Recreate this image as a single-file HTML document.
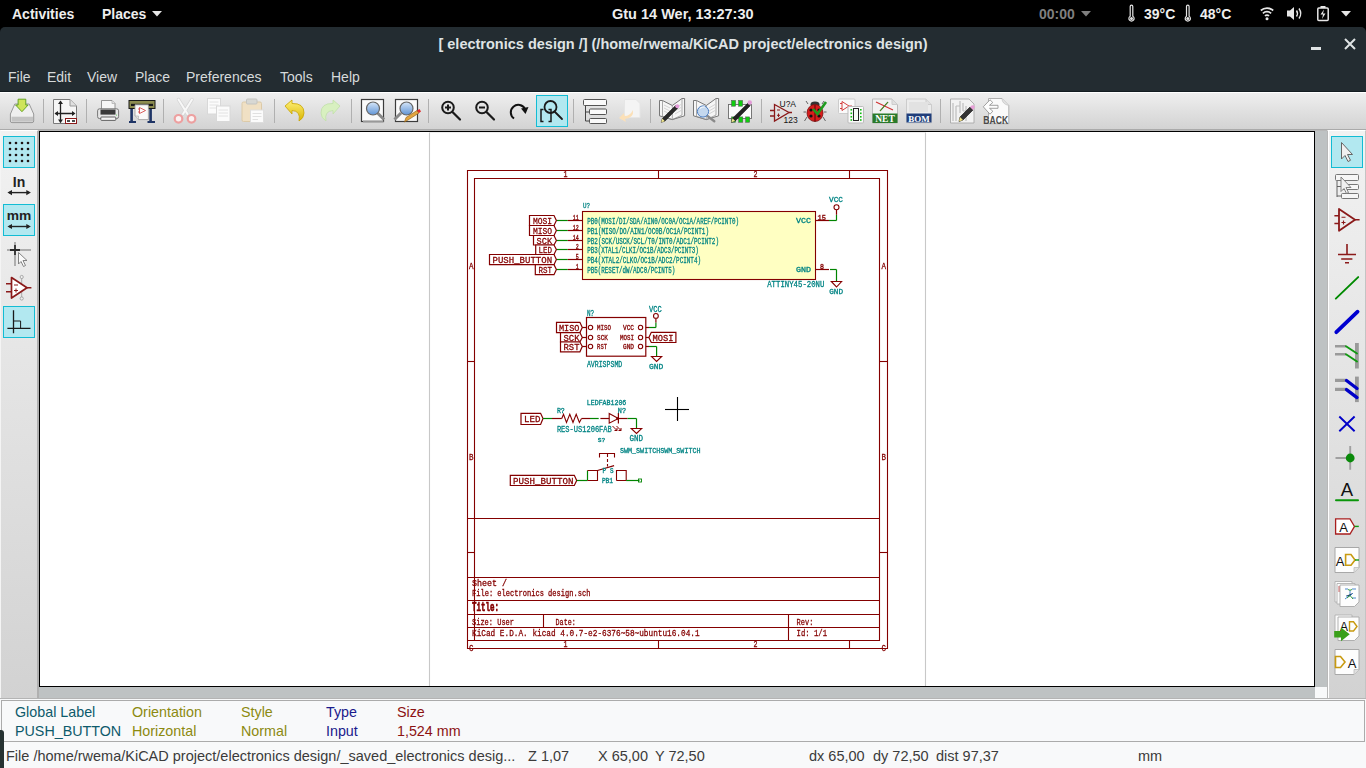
<!DOCTYPE html>
<html><head><meta charset="utf-8">
<style>
*{box-sizing:border-box}
html,body{margin:0;padding:0;width:1366px;height:768px;overflow:hidden;background:#000;font-family:"Liberation Sans",sans-serif}
.a{position:absolute}
#top{left:0;top:0;width:1366px;height:27px;background:#000;color:#eee;font-weight:bold;font-size:14px}
#top span{position:absolute;top:6px;white-space:nowrap}
#win{left:0;top:27px;width:1366px;height:65px;background:#232c31;border-radius:5px 5px 0 0}
#ttl{left:0;top:27px;width:1366px;text-align:center;color:#dfe3e4;font-weight:bold;font-size:14.5px;line-height:16px;padding-top:9px}
.menu{top:67px;color:#d6dadb;font-size:14px;line-height:20px;white-space:nowrap}
#tb{left:0;top:92px;width:1366px;height:39px;background:linear-gradient(#fff 0,#fff 1px,#efefef 1px,#e2e2e2 17px,#d3d3d3 37px,#aaa 37px,#aaa 38px,#b8b8b8 38px)}
.sep{position:absolute;top:98px;width:1px;height:26px;background:#b4b4b4;border-right:1px solid #f4f4f4}
#lp{left:0;top:130px;width:39px;height:568px;background:linear-gradient(#f2f2f2,#e2e2e2 50%,#d2d2d2);border-left:1px solid #f4f4f4;border-top:1px solid #fff;border-right:2px solid #b0b0b0}
#rp{left:1327px;top:130px;width:39px;height:568px;background:linear-gradient(#f2f2f2,#e2e2e2 50%,#d2d2d2);border-left:1px solid #b8b8b8;border-top:1px solid #fff;border-right:1px solid #c4c4c4;box-shadow:inset 1px 0 0 #fff}
.sel{position:absolute;width:32px;height:32px;background:#b2e8f0;border:1.5px solid #19bfd6}
#cv{left:39px;top:131px;width:1276px;height:556px;background:#fff;border:1px solid #000}
#sbr{left:1315px;top:131px;width:12px;height:556px;background:#bec2c3}
#sbb{left:39px;top:687px;width:1276px;height:11px;background:#bec2c3}
#corner{left:1315px;top:687px;width:12px;height:11px;background:#f8f9fa}
#msg{left:0;top:698px;width:1366px;height:45px;background:#f8f9fa;border-top:1px solid #b4b4b4}
#msgin{left:1px;top:700px;width:1364px;height:42px;border:1px solid #ababab;background:#f8f9fa}
.mt{position:absolute;font-size:14.3px;white-space:nowrap;line-height:16px}
#st{left:0;top:742px;width:1366px;height:26px;background:#f8f9fa}
.stt{position:absolute;top:748px;font-size:14.5px;color:#3b3b3b;white-space:nowrap;line-height:16px}
</style></head><body>
<div id="top" class="a">
 <span style="left:12px">Activities</span>
 <span style="left:102px">Places</span>
 <svg class="a" style="left:152px;top:11px" width="10" height="6"><path d="M0 0H10L5 5.5Z" fill="#e6e6e6"/></svg>
 <span style="left:612px;font-size:14.5px">Gtu 14 Wer, 13:27:30</span>
 <span style="left:1039px;color:#7f7f7f">00:00</span>
 <svg class="a" style="left:1081px;top:11px" width="10" height="6"><path d="M0 0H10L5 5.5Z" fill="#7f7f7f"/></svg>
 <span style="left:1144px">39°C</span>
 <span style="left:1200px">48°C</span>
 <svg class="a" style="left:1341px;top:11px" width="10" height="6"><path d="M0 0H10L5 5.5Z" fill="#e6e6e6"/></svg>
</div>
<svg class="a" style="left:0;top:0" width="1366" height="27">
 <g fill="none" stroke="#e6e6e6" stroke-width="1.2">
  <path d="M1130.2 6.5A1.3 1.3 0 0 1 1132.8 6.5V16.2A2.6 2.6 0 1 1 1130.2 16.2Z"/>
  <path d="M1186.5 6.5A1.3 1.3 0 0 1 1189.1 6.5V16.2A2.6 2.6 0 1 1 1186.5 16.2Z"/>
 </g>
 <circle cx="1131.5" cy="18.4" r="1.5" fill="#e6e6e6"/><circle cx="1187.8" cy="18.4" r="1.5" fill="#e6e6e6"/>
 <g fill="none" stroke="#e6e6e6" stroke-width="1.7">
  <path d="M1260.8 10.5A9.5 9.5 0 0 1 1273.2 10.5"/>
  <path d="M1262.9 13.3A6 6 0 0 1 1271.1 13.3"/>
  <path d="M1265 16A2.8 2.8 0 0 1 1269 16"/>
 </g>
 <circle cx="1267" cy="18.7" r="1.5" fill="#e6e6e6"/>
 <path d="M1287 10.5H1290L1294 7V20L1290 16.5H1287Z" fill="#e6e6e6"/>
 <g fill="none" stroke="#e6e6e6" stroke-width="1.4"><path d="M1296.5 10.5Q1298.5 13.5 1296.5 16.5"/><path d="M1299 8.5Q1302.5 13.5 1299 18.5"/></g>
 <rect x="1317.8" y="8" width="10.4" height="12.5" rx="1" fill="none" stroke="#e6e6e6" stroke-width="1.5"/>
 <rect x="1320.5" y="6" width="5" height="2" fill="#e6e6e6"/>
 <path d="M1324 9.5L1320.5 14.5H1323L1322 19L1325.5 13.5H1323Z" fill="#e6e6e6"/>
</svg>
<div id="win" class="a"></div>
<div id="ttl" class="a">[ electronics design /] (/home/rwema/KiCAD project/electronics design)</div>
<div class="a" style="left:1311px;top:47px;width:10px;height:2.5px;background:#dfe3e4"></div>
<svg class="a" style="left:1344px;top:38px" width="12" height="12"><path d="M1 1L11 11M11 1L1 11" stroke="#dfe3e4" stroke-width="2"/></svg>
<span class="a menu" style="left:8px">File</span>
<span class="a menu" style="left:47px">Edit</span>
<span class="a menu" style="left:87px">View</span>
<span class="a menu" style="left:135px">Place</span>
<span class="a menu" style="left:186px">Preferences</span>
<span class="a menu" style="left:280px">Tools</span>
<span class="a menu" style="left:331px">Help</span>
<div class="a" style="left:0;top:91px;width:1366px;height:1px;background:#141d22"></div>
<div id="tb" class="a"></div>
<div id="lp" class="a"></div>
<div id="rp" class="a"></div>
<div id="cv" class="a"></div>
<div id="sbr" class="a"></div>
<div id="sbb" class="a"></div>
<div id="corner" class="a"></div>
<div id="msg" class="a"></div>
<div id="msgin" class="a"></div>
<span class="mt" style="left:15px;top:704px;color:#0d5a6b">Global Label</span>
<span class="mt" style="left:15px;top:723px;color:#0d5a6b">PUSH_BUTTON</span>
<span class="mt" style="left:132px;top:704px;color:#8c8a10">Orientation</span>
<span class="mt" style="left:132px;top:723px;color:#8c8a10">Horizontal</span>
<span class="mt" style="left:241px;top:704px;color:#8c8a10">Style</span>
<span class="mt" style="left:241px;top:723px;color:#8c8a10">Normal</span>
<span class="mt" style="left:326px;top:704px;color:#1a1a8c">Type</span>
<span class="mt" style="left:326px;top:723px;color:#1a1a8c">Input</span>
<span class="mt" style="left:397px;top:704px;color:#8c1212">Size</span>
<span class="mt" style="left:397px;top:723px;color:#8c1212">1,524 mm</span>
<div id="st" class="a"></div>
<span class="stt" style="left:6px">File /home/rwema/KiCAD project/electronics design/_saved_electronics desig...</span>
<span class="stt" style="left:528px">Z 1,07</span>
<span class="stt" style="left:598px">X 65,00</span>
<span class="stt" style="left:655px">Y 72,50</span>
<span class="stt" style="left:809px">dx 65,00</span>
<span class="stt" style="left:873px">dy 72,50</span>
<span class="stt" style="left:936px">dist 97,37</span>
<span class="stt" style="left:1138px">mm</span>
<div class="a" style="left:0;top:730px;width:4px;height:38px;background:#263232;border-radius:0 3px 0 0"></div>
<!--TOOLBAR-->
<svg class="a" style="left:0;top:0" width="1366" height="768" viewBox="0 0 1366 768">
<defs>
<linearGradient id="gDrive" x1="0" y1="0" x2="0" y2="1"><stop offset="0" stop-color="#f4f4f4"/><stop offset="0.6" stop-color="#d8d8d8"/><stop offset="1" stop-color="#a8a8a8"/></linearGradient>
<linearGradient id="gGreen" x1="0" y1="0" x2="0" y2="1"><stop offset="0" stop-color="#b6e34e"/><stop offset="1" stop-color="#5fa60f"/></linearGradient>
<linearGradient id="gYel" x1="0" y1="0" x2="0" y2="1"><stop offset="0" stop-color="#fff27a"/><stop offset="1" stop-color="#d9b400"/></linearGradient>
<linearGradient id="gLens" x1="0" y1="0" x2="0" y2="1"><stop offset="0" stop-color="#d6e6f8"/><stop offset="1" stop-color="#5f94d6"/></linearGradient>
</defs>
<!-- separators -->
<g fill="#b0b0b0">
<rect x="43" y="99" width="1" height="24"/><rect x="86" y="99" width="1" height="24"/><rect x="163" y="99" width="1" height="24"/>
<rect x="274" y="99" width="1" height="24"/><rect x="351" y="99" width="1" height="24"/><rect x="428" y="99" width="1" height="24"/>
<rect x="573" y="99" width="1" height="24"/><rect x="650" y="99" width="1" height="24"/><rect x="761" y="99" width="1" height="24"/>
<rect x="940" y="99" width="1" height="24"/>
</g>
<!-- save -->
<path d="M14.8 104H29.2L33.7 114V121Q33.7 122.6 32 122.6H12Q10.4 122.6 10.4 121V114Z" fill="#efefef" stroke="#8e8e8e" stroke-width="0.9"/>
<rect x="11.5" y="116.7" width="21.5" height="5" fill="#c4c4c4"/>
<path d="M18.1 99.2H25.8V105H28.1L21.95 111.7L15.6 105H18.1Z" fill="#cfe45a" stroke="#5a9e1a" stroke-width="0.9"/>
<!-- page settings -->
<path d="M53.5 99.5H70L76.5 106V123.5H53.5Z" fill="#f6f6f6" stroke="#7a7a7a"/>
<path d="M70 99.5V106H76.5" fill="#e0e0e0" stroke="#9a9a9a"/>
<path d="M60.5 101.5V122.5M55.5 113.5H74" stroke="#222" stroke-width="1.3"/>
<path d="M60.5 100.5L58 104H63ZM60.5 123L58 119.5H63ZM54.5 113.5L58 111V116ZM75.5 113.5L72 111V116Z" fill="#222"/>
<rect x="65.5" y="118.5" width="11" height="5" fill="#fff" stroke="#8b1a1a"/>
<path d="M67 121H70M72 121H75" stroke="#111" stroke-width="1.4"/>
<!-- print -->
<path d="M101.5 100.5H112L115 103.5V111H101.5Z" fill="#f6f6f6" stroke="#8a8a8a" stroke-width="0.9"/>
<path d="M112 100.5V103.5H115" fill="#e4e4e4" stroke="#aaa" stroke-width="0.7"/>
<rect x="97.6" y="108.8" width="21" height="9.8" rx="2" fill="#e6e6e6" stroke="#6a6a6a" stroke-width="0.9"/>
<rect x="100.5" y="109.6" width="15" height="5" fill="#3a3a3a"/>
<rect x="100.8" y="117" width="15" height="3.4" rx="0.8" fill="#f4f4f4" stroke="#555" stroke-width="0.9"/>
<rect x="116" y="114.6" width="1" height="1" fill="#5fd35f"/>
<!-- plot -->
<path d="M131.6 108V121.3M150.6 108V121.3" stroke="#1f3566" stroke-width="2.6"/>
<rect x="129" y="121" width="7" height="2" fill="#1f3566"/><rect x="147.5" y="121" width="7.5" height="2" fill="#1f3566"/>
<rect x="129" y="100.5" width="26" height="8" fill="#8c8c50" stroke="#1a1a1a" stroke-width="1"/>
<rect x="131" y="103.8" width="22" height="2.2" fill="#1a1a1a"/>
<path d="M135 104.8H148.4V119.6H138.5L135 116Z" fill="#fafafa" stroke="#999" stroke-width="0.8"/>
<path d="M138.5 119.6V116H135" fill="#e4e4e4" stroke="#aaa" stroke-width="0.6"/>
<path d="M139.5 107.5L145.5 110.5L139.5 113.5ZM138 109H139.5M138 112H139.5" fill="none" stroke="#d03a3a" stroke-width="0.8"/>
<!-- cut disabled -->
<path d="M178.5 99.5L187.5 114M192 99.5L183 114" stroke="#d6d6d6" stroke-width="3.4" stroke-linecap="round"/>
<path d="M178.5 99.5L187.5 114M192 99.5L183 114" stroke="#f8f8f8" stroke-width="2" stroke-linecap="round"/>
<circle cx="178.5" cy="118.8" r="3.8" fill="#fbf3f3" stroke="#eda0a0" stroke-width="2.2"/>
<circle cx="191.5" cy="118.8" r="3.8" fill="#fbf3f3" stroke="#eda0a0" stroke-width="2.2"/>
<!-- copy -->
<rect x="207.5" y="98.5" width="13" height="15.5" fill="#fbfbfb" stroke="#d8d8d8"/>
<path d="M209.5 102H218.5M209.5 105H218.5M209.5 108H218.5" stroke="#e2e2e2"/>
<rect x="216.5" y="106" width="13.5" height="15.5" fill="#fbfbfb" stroke="#d8d8d8"/>
<path d="M218.5 110H228M218.5 113H228M218.5 116H228" stroke="#e2e2e2"/>
<!-- paste -->
<rect x="242" y="102" width="19.5" height="19.5" rx="1.5" fill="#f0e0c4" stroke="#dccaa8"/>
<rect x="246.5" y="99" width="10.5" height="5" rx="1" fill="#d8d8d4" stroke="#c4c4c0"/>
<rect x="250.5" y="110" width="13" height="12.5" fill="#fbfbfb" stroke="#dedede"/>
<path d="M252.5 113.5H261.5M252.5 116.5H261.5M252.5 119.5H258" stroke="#e0e0e0"/>
<!-- undo -->
<path d="M285 106L292 100V103.5Q304 103 304 113Q304 118 299 121Q301 111 292 110.5V114Z" fill="url(#gYel)" stroke="#c9a400" stroke-width="0.8"/>
<!-- redo disabled -->
<path d="M340 106L333 100V103.5Q321 103 321 113Q321 118 326 121Q324 111 333 110.5V114Z" fill="#d8f0c0" stroke="#c0e0a8" stroke-width="0.8"/>
<!-- find -->
<rect x="361.5" y="99.5" width="22" height="22" fill="#fafafa" stroke="#3c3c3c" stroke-width="1.2"/>
<path d="M363 120.5H383.5V122.5H363Z" fill="#999"/>
<path d="M377.5 113L384 119.5" stroke="#888" stroke-width="3"/>
<circle cx="373" cy="108.5" r="6.5" fill="url(#gLens)" stroke="#666" stroke-width="1.2"/>
<!-- find replace -->
<rect x="395.5" y="99.5" width="22" height="22" fill="#fafafa" stroke="#3c3c3c" stroke-width="1.2"/>
<path d="M401 113L394.5 119.5" stroke="#888" stroke-width="3"/>
<circle cx="406.5" cy="108.5" r="6.5" fill="url(#gLens)" stroke="#666" stroke-width="1.2"/>
<path d="M404.5 122L406 117.5L417 110.5L419 113L408 120Z" fill="#e4a640" stroke="#8a5a10" stroke-width="0.6"/>
<path d="M417 110.5L419.5 109L421 111.5L419 113Z" fill="#e02a2a"/>
<!-- zoom in -->
<circle cx="448" cy="107.5" r="5.8" fill="none" stroke="#1a1a1a" stroke-width="2"/>
<path d="M452.5 112L460 119.5" stroke="#1a1a1a" stroke-width="2.2" stroke-linecap="round"/>
<path d="M445 107.5H451M448 104.5V110.5" stroke="#1a1a1a" stroke-width="2"/>
<!-- zoom out -->
<circle cx="482" cy="107.5" r="5.8" fill="none" stroke="#1a1a1a" stroke-width="2"/>
<path d="M486.5 112L494 119.5" stroke="#1a1a1a" stroke-width="2.2" stroke-linecap="round"/>
<path d="M479 107.5H485" stroke="#1a1a1a" stroke-width="2"/>
<!-- redraw -->
<path d="M514 118.5A7.5 7.5 0 1 1 525 109" fill="none" stroke="#111" stroke-width="2"/>
<path d="M521 108.5L528.5 107L525.5 114Z" fill="#111"/>
<!-- zoom fit selected -->
<rect x="536.5" y="95.5" width="31" height="31" fill="#b2e8f0" stroke="#12bcd4" stroke-width="1"/>
<circle cx="550.5" cy="107" r="6" fill="none" stroke="#1a1a1a" stroke-width="1.8"/>
<path d="M554.5 111.5L562 119" stroke="#1a1a1a" stroke-width="1.8" stroke-linecap="round"/>
<path d="M543.5 109.5H541V121.5H543.5M548.5 109.5H551V121.5H548.5" fill="none" stroke="#1a1a1a" stroke-width="1.5"/>
<!-- hierarchy -->
<path d="M585.5 105.5V121M585.5 112H589.5M585.5 121H589.5" fill="none" stroke="#444" stroke-width="1"/>
<rect x="583.5" y="99.5" width="23" height="6" rx="1" fill="#fafafa" stroke="#555"/>
<rect x="589.5" y="109" width="17" height="5.5" rx="1" fill="#fafafa" stroke="#555"/>
<rect x="589.5" y="118.5" width="17" height="5" rx="1" fill="#fafafa" stroke="#555"/>
<!-- leave sheet disabled -->
<path d="M624.5 99.5H636L640 103.5V117.5H624.5Z" fill="#f4f4f4" stroke="#e6e6e6"/>
<path d="M633 110Q634 118 625 119L626 122L619 118L624 113L624.5 116Q630 116 633 110Z" fill="#fbe0b8"/>
<!-- library editor -->
<path d="M659.5 100.5H662.5L672.3 105.5L682 98.5H684.6V115.8L672.3 119.6L659.5 115.8Z" fill="#f6f6f6" stroke="#6a6a6a" stroke-width="0.9" stroke-linejoin="round"/>
<path d="M662.5 100.5V116.5L672.3 119.6M682 98.5V115L672.3 119.6M672.3 105.5V119.6" fill="none" stroke="#8a8a8a" stroke-width="0.7"/>
<path d="M664 105L670 108M664 108L670 111M664 111L670 114M675 108L681 104.5M675 111L681 107.5M675 114L681 110.5" stroke="#c4c4c4" stroke-width="0.7"/>
<path d="M661.2 122.3L662.3 118.6L675.5 105.6L677.9 108L664.9 121.2Z" fill="#2a2a2a" stroke="#111" stroke-width="0.5"/>
<path d="M661.2 122.3L662.3 118.6L664.9 121.2Z" fill="#f2e890"/>
<circle cx="677.3" cy="106.2" r="2" fill="#e49ad8"/>
<!-- lib browser -->
<path d="M693.5 100.5H696.5L706.3 105.5L716 98.5H718.6V115.8L706.3 119.6L693.5 115.8Z" fill="#f6f6f6" stroke="#6a6a6a" stroke-width="0.9" stroke-linejoin="round"/>
<path d="M696.5 100.5V116.5L706.3 119.6M716 98.5V115L706.3 119.6M706.3 105.5V119.6" fill="none" stroke="#8a8a8a" stroke-width="0.7"/>
<path d="M709 108L715 104.5M709 111L715 107.5M709 114L715 110.5" stroke="#c4c4c4" stroke-width="0.7"/>
<path d="M707.5 116L714.3 121.3" stroke="#8a8a8a" stroke-width="2.4" stroke-linecap="round"/>
<circle cx="703" cy="111.5" r="5.6" fill="#c4d8ee" stroke="#4a7cc0" stroke-width="1"/>
<path d="M700 108.5Q702 106.5 705 107" stroke="#f4f8fc" stroke-width="1.2" fill="none"/>
<!-- footprint editor -->
<rect x="728.5" y="104.5" width="23" height="14" fill="#fbfbfb" stroke="#6a6a6a" stroke-width="0.9"/>
<rect x="731.5" y="100.4" width="4.1" height="5.8" fill="#10cc10" stroke="#555" stroke-width="0.5"/><rect x="738.5" y="100.4" width="4.1" height="5.8" fill="#10cc10" stroke="#555" stroke-width="0.5"/>
<rect x="731.5" y="116.9" width="4.1" height="5.4" fill="#10cc10" stroke="#555" stroke-width="0.5"/><rect x="738.7" y="116.9" width="4.1" height="5.4" fill="#10cc10" stroke="#555" stroke-width="0.5"/><rect x="745.6" y="116.9" width="4.1" height="5.4" fill="#10cc10" stroke="#555" stroke-width="0.5"/>
<path d="M731.3 122.3L732.5 118.3L747.8 103.2L750.3 105.7L735.2 121Z" fill="#222" stroke="#111" stroke-width="0.5"/>
<path d="M731.3 122.3L732.5 118.3L735.2 121Z" fill="#f2e890"/>
<circle cx="749.8" cy="102.5" r="2.2" fill="#e49ad8"/>
<!-- annotate -->
<path d="M774.5 104.5L789 112.5L774.5 121Z" fill="none" stroke="#8b1a1a" stroke-width="1.3"/>
<path d="M770 110.5H774.5M770 116H774.5M789 112.5H792" stroke="#8b1a1a" stroke-width="1.3"/>
<path d="M777 110H780M778.5 113.5V117M777 115.3H780" stroke="#8b1a1a" stroke-width="1"/>
<text x="779.5" y="106.5" font-size="8.5" font-family="Liberation Sans" fill="#111">U?A</text>
<text x="783.5" y="122.5" font-size="8.5" font-family="Liberation Sans" fill="#111">123</text>
<!-- ERC bug -->
<path d="M808 104L806 101M822 104L824 101M806 112H803.5M824 112H826.5M807 117L804.5 121M823 117L825.5 121" stroke="#555" stroke-width="0.9"/>
<ellipse cx="815" cy="104.5" rx="4.5" ry="3" fill="#333"/>
<ellipse cx="815" cy="113" rx="8" ry="8.5" fill="#d81c1c" stroke="#7a1010" stroke-width="0.8"/>
<path d="M815 105V121.5" stroke="#300" stroke-width="0.8"/>
<circle cx="811" cy="110" r="1.6" fill="#111"/><circle cx="819" cy="110" r="1.6" fill="#111"/><circle cx="811" cy="116" r="1.6" fill="#111"/><circle cx="819" cy="116" r="1.6" fill="#111"/>
<path d="M813 109L817.5 114L826 102" fill="none" stroke="#1e9a1e" stroke-width="2.6"/>
<!-- cvpcb -->
<rect x="838.5" y="99" width="16.5" height="14.5" rx="1" fill="#fafafa" stroke="#ccc"/>
<path d="M842 101.5L849 106L842 110.5Z" fill="none" stroke="#d02a2a" stroke-width="0.9"/>
<path d="M840 103.5H842M840 108.5H842M849 106H852" stroke="#d02a2a" stroke-width="0.9"/>
<rect x="848" y="106.5" width="15.5" height="16.5" rx="1" fill="#fafafa" stroke="#bbb"/>
<rect x="853.5" y="108.5" width="5" height="12" fill="#fafafa" stroke="#222" stroke-width="1"/>
<g fill="#11bb11"><rect x="850.5" y="109" width="1.6" height="1.6"/><rect x="850.5" y="112.5" width="1.6" height="1.6"/><rect x="850.5" y="116" width="1.6" height="1.6"/><rect x="850.5" y="119.2" width="1.6" height="1.6"/><rect x="860" y="109" width="1.6" height="1.6"/><rect x="860" y="112.5" width="1.6" height="1.6"/><rect x="860" y="116" width="1.6" height="1.6"/><rect x="860" y="119.2" width="1.6" height="1.6"/></g>
<!-- NET -->
<path d="M872.5 99H892L897.5 104.5V123H872.5Z" fill="#f2f2f2" stroke="#bbb"/>
<path d="M892 99V104.5H897.5" fill="#e0e0e0" stroke="#ccc"/>
<path d="M876 102L893 110M880 111L888 102" stroke="#d03030" stroke-width="1.1"/>
<path d="M880 111L888 102" stroke="#2a9a2a" stroke-width="1.1"/>
<rect x="872.5" y="113.5" width="25" height="9.5" fill="#2a7a2a"/>
<text x="885" y="122" font-size="9.5" font-weight="bold" font-family="Liberation Serif" fill="#fff" text-anchor="middle">NET</text>
<!-- BOM -->
<path d="M906.5 99H926L931.5 104.5V123H906.5Z" fill="#ececec" stroke="#ccc"/>
<path d="M926 99V104.5H931.5" fill="#e0e0e0" stroke="#ccc"/>
<rect x="909" y="102" width="19" height="10" fill="#e2e2e2"/>
<rect x="906.5" y="113.5" width="25" height="9" fill="#213e7a"/>
<text x="919" y="121.5" font-size="9" font-weight="bold" font-family="Liberation Serif" fill="#fff" text-anchor="middle">BOM</text>
<!-- pcbnew -->
<path d="M950.5 99H969L974 104V123H950.5Z" fill="#f2f2f2" stroke="#a8a8a8" stroke-width="0.9"/>
<path d="M953 103V121M956 106V121M960 101V113M963 103V111M966 106V121" stroke="#bdbdbd" stroke-width="1.2"/>
<path d="M956 106H960M963 111H966" stroke="#bdbdbd" stroke-width="1.2"/>
<path d="M959 121.5L960 117L970 107L973 110L963 120Z" fill="#333" stroke="#111" stroke-width="0.6"/>
<path d="M959 121.5L960 117L963 120Z" fill="#f0e080"/>
<path d="M970 107L971.5 105.5Q974 104.5 975 107L973 110Z" fill="#e8a0d8"/>
<!-- BACK -->
<path d="M988.5 98.5H1002L1008.8 105.5V123.7H988.5Z" fill="#fafafa" stroke="#a8a8a8" stroke-width="0.9"/>
<path d="M1002 98.5Q1002 104 1008.8 105.5" fill="#e2e2e2" stroke="#bbb" stroke-width="0.6"/>
<path d="M983.3 106.8L990 99.8L992.8 102.5L989.5 105.3H998V108.3H989.5L992.8 111.2L990 114.2Z" fill="#fdfdfd" stroke="#8a8a8a" stroke-width="0.8" stroke-linejoin="round"/>
<text x="983.3" y="123.6" font-size="11" font-weight="bold" font-family="Liberation Sans" fill="#4a4a4a" textLength="24.8" lengthAdjust="spacingAndGlyphs">BACK</text>
</svg>

<!--SIDE-->
<svg class="a" style="left:0;top:0" width="1366" height="768" viewBox="0 0 1366 768">
<!-- LEFT TOOLBAR -->
<rect x="3.5" y="136.5" width="31" height="31" fill="#b2e8f0" stroke="#12bcd4" stroke-width="1"/>
<g fill="#1e1414">
<circle cx="10" cy="143" r="1.3"/><circle cx="16" cy="143" r="1.3"/><circle cx="22" cy="143" r="1.3"/><circle cx="28" cy="143" r="1.3"/>
<circle cx="10" cy="149" r="1.3"/><circle cx="16" cy="149" r="1.3"/><circle cx="22" cy="149" r="1.3"/><circle cx="28" cy="149" r="1.3"/>
<circle cx="10" cy="155" r="1.3"/><circle cx="16" cy="155" r="1.3"/><circle cx="22" cy="155" r="1.3"/><circle cx="28" cy="155" r="1.3"/>
<circle cx="10" cy="161" r="1.3"/><circle cx="16" cy="161" r="1.3"/><circle cx="22" cy="161" r="1.3"/><circle cx="28" cy="161" r="1.3"/>
</g>
<text x="19" y="187" font-size="14" font-weight="bold" font-family="Liberation Sans" fill="#222" text-anchor="middle">In</text>
<path d="M9 192.6H29" stroke="#222" stroke-width="1.4"/>
<path d="M7.4 192.6L12 190V195.2ZM30.9 192.6L26.3 190V195.2Z" fill="#222"/>
<rect x="3.5" y="204.5" width="31" height="31" fill="#b2e8f0" stroke="#12bcd4" stroke-width="1"/>
<text x="19" y="220.3" font-size="13" font-weight="bold" font-family="Liberation Sans" fill="#222" text-anchor="middle" textLength="24.6" lengthAdjust="spacingAndGlyphs">mm</text>
<path d="M9 226.5H29" stroke="#222" stroke-width="1.4"/>
<path d="M7.4 226.5L12 223.9V229.1ZM30.9 226.5L26.3 223.9V229.1Z" fill="#222"/>
<!-- cursor -->
<path d="M7 250H10M20 250H31M15 242V245M15 255V266" stroke="#9a9a9a" stroke-width="1.5"/>
<path d="M10 250H20M15 245V255" stroke="#2a2a2a" stroke-width="1.8"/>
<path d="M18.5 252.5V264L21 261.5L23.5 266.5L25.5 265.5L23 260.5H27Z" fill="#fafafa" stroke="#777" stroke-width="0.9"/>
<!-- opamp -->
<path d="M21.7 277.5V298.5" stroke="#aaa" stroke-width="1"/>
<circle cx="21.7" cy="277" r="1.6" fill="#f0f0f0" stroke="#999" stroke-width="0.8"/>
<circle cx="21.7" cy="298.5" r="1.6" fill="#f0f0f0" stroke="#999" stroke-width="0.8"/>
<path d="M11.5 277.5L27 287.7L11.5 298Z" fill="#fff" stroke="#8b1a1a" stroke-width="1.7" stroke-linejoin="round"/>
<path d="M6 283.7H11.5M6 291.8H11.5M27 287.7H31.4" stroke="#8b1a1a" stroke-width="1.6"/>
<path d="M14 285H18M14 290.5H18M16 288.5V292.5" stroke="#8b1a1a" stroke-width="1"/>
<!-- ortho -->
<rect x="3.5" y="306.5" width="31" height="31" fill="#b2e8f0" stroke="#12bcd4" stroke-width="1"/>
<path d="M13.5 310.2V333.2M7.4 328.4H30.5" stroke="#1a1a1a" stroke-width="1.3"/>
<path d="M13.5 321H20.6V328.4" fill="none" stroke="#1a1a1a" stroke-width="1"/>

<!-- RIGHT TOOLBAR -->
<rect x="1331.5" y="136.5" width="31" height="31" fill="#b2e8f0" stroke="#12bcd4" stroke-width="1"/>
<path d="M1341.5 142.5V159L1345 155.5L1348 161.5L1350.5 160.3L1347.5 154.5H1352.5Z" fill="#f0f0f0" stroke="#666" stroke-width="1"/>
<!-- hier nav -->
<path d="M1337 180.5V197M1337 186.5H1341M1337 196H1341" fill="none" stroke="#555" stroke-width="0.9"/>
<rect x="1335.5" y="174.5" width="23" height="6" rx="1" fill="#f6f6f6" stroke="#777"/>
<rect x="1341.5" y="184.5" width="17" height="5" rx="1" fill="#f6f6f6" stroke="#777"/>
<rect x="1341.5" y="193.5" width="17" height="5" rx="1" fill="#f6f6f6" stroke="#777"/>
<path d="M1341 177V191.5L1344 188.5L1346.5 193.5L1348.5 192.5L1346 187.5H1351Z" fill="#f0f0f0" stroke="#777" stroke-width="0.9"/>
<!-- opamp -->
<path d="M1339 209L1355 219.7L1339 230.8Z" fill="none" stroke="#8b1a1a" stroke-width="1.8" stroke-linejoin="round"/>
<path d="M1334.4 215.7H1339M1334.4 223.5H1339M1355 219.7H1359.6" stroke="#8b1a1a" stroke-width="1.6"/>
<path d="M1341.5 217.3H1345.5M1341.5 222.5H1345.5M1343.5 220.5V224.5" stroke="#8b1a1a" stroke-width="1.1"/>
<!-- gnd -->
<path d="M1347 244V254.5M1338 254.5H1356M1341.2 259H1352.4M1345 262.8H1349" stroke="#8b1a1a" stroke-width="1.6"/>
<!-- wire -->
<path d="M1335.8 298.6L1358.2 277.1" stroke="#008a00" stroke-width="1.9" stroke-linecap="round"/>
<!-- bus -->
<path d="M1336.3 332.2L1357.6 311.7" stroke="#0000d0" stroke-width="3.8" stroke-linecap="round"/>
<!-- wire entry -->
<rect x="1355" y="343" width="3.8" height="25.5" fill="#9a9a9a"/>
<path d="M1335 346.2H1346M1335 354.2H1346" stroke="#9a9a9a" stroke-width="2.4"/>
<path d="M1346 346.2L1357 353.5M1346 354.2L1357 361.5" stroke="#119911" stroke-width="1.9" stroke-linecap="round"/>
<!-- bus entry -->
<rect x="1355" y="376.6" width="3.8" height="25.5" fill="#9a9a9a"/>
<path d="M1335 380.3H1346M1335 389.4H1346" stroke="#9a9a9a" stroke-width="3.2"/>
<path d="M1346.5 380.5L1357 388.5M1346.5 389.6L1357 397.6" stroke="#0000c8" stroke-width="3.3" stroke-linecap="round"/>
<!-- no connect -->
<path d="M1339.3 416.5L1354.6 431.2M1354.6 416.5L1339.3 431.2" stroke="#0000c8" stroke-width="1.9"/>
<!-- junction -->
<path d="M1335.5 458H1350M1350.2 446V469.7" stroke="#a0a0a0" stroke-width="1.9"/>
<circle cx="1350.2" cy="458" r="4.4" fill="#0a8a0a"/>
<!-- text A -->
<text x="1347" y="496.2" font-size="18.5" font-family="Liberation Sans" fill="#111" text-anchor="middle">A</text>
<path d="M1336 500.2H1358" stroke="#0a960a" stroke-width="2" stroke-linecap="round"/>
<!-- global label -->
<path d="M1335.6 518.8H1350L1354.5 526.4L1350 534H1335.6Z" fill="#fff" stroke="#a81e1e" stroke-width="1.3"/>
<path d="M1354.5 526.4H1358.8" stroke="#119911" stroke-width="1.4"/>
<text x="1343.5" y="532.2" font-size="13" font-family="Liberation Sans" fill="#111" text-anchor="middle">A</text>
<!-- hier label -->
<path d="M1335 547.5H1359V567.5L1354 572.5H1335Z" fill="#fdfdfd" stroke="#a8a8a8" stroke-width="1"/>
<path d="M1354 572.5V567.5H1359" fill="#e0e0e0" stroke="#bbb" stroke-width="0.8"/>
<text x="1340" y="565.5" font-size="13" font-family="Liberation Sans" fill="#111" text-anchor="middle">A</text>
<path d="M1345.6 554.5H1351L1355 560L1351 565.3H1345.6Z" fill="none" stroke="#c89a10" stroke-width="1.6"/>
<path d="M1355 560H1359" stroke="#119911" stroke-width="1.4"/>
<!-- hier sheet -->
<path d="M1335 581.5H1352V602H1335Z" fill="#fbfbfb" stroke="#b0b0b0" stroke-width="0.9"/>
<path d="M1337 583.5H1355V604H1337Z" fill="#fbfbfb" stroke="#b0b0b0" stroke-width="0.9"/>
<path d="M1340 585H1359V602L1354.5 606.5H1340Z" fill="#fdfdfd" stroke="#a8a8a8" stroke-width="0.9"/>
<path d="M1339 586V592" stroke="#c04040" stroke-width="0.8"/>
<path d="M1345 589H1348M1352 589H1356M1350 590V596M1346 596L1350 596L1353 593M1345 599L1349 596M1352 598H1356" stroke="#3a7ac8" stroke-width="0.9"/>
<path d="M1348 589.5Q1350 591 1352 589.5M1347 598L1350 595.5L1353 599" fill="none" stroke="#2a9a2a" stroke-width="0.9"/>
<!-- import hier pin -->
<path d="M1335 615H1352V636H1335Z" fill="#fbfbfb" stroke="#b0b0b0" stroke-width="0.9"/>
<path d="M1338 617H1359V636L1354.5 640.5H1338Z" fill="#fdfdfd" stroke="#a8a8a8" stroke-width="0.9"/>
<text x="1344" y="631" font-size="12" font-family="Liberation Sans" fill="#111" text-anchor="middle">A</text>
<path d="M1349.5 621.8H1353.5L1357 626.5L1353.5 631H1349.5Z" fill="none" stroke="#c89a10" stroke-width="1.4"/>
<path d="M1334.2 631H1341V627.5L1349.7 634.3L1341 641.2V637.6H1334.2Z" fill="#3aa01a"/>
<!-- DA -->
<path d="M1335 649.5H1359V669.5L1354 674.5H1335Z" fill="#fdfdfd" stroke="#a8a8a8" stroke-width="1"/>
<path d="M1354 674.5V669.5H1359" fill="#e0e0e0" stroke="#bbb" stroke-width="0.8"/>
<path d="M1335.5 656.5H1340.5L1345 662L1340.5 667.5H1335.5Z" fill="none" stroke="#c89a10" stroke-width="1.6"/>
<text x="1352" y="667.5" font-size="13" font-family="Liberation Sans" fill="#111" text-anchor="middle">A</text>
</svg>

<!--SCHEMATIC-->
<svg class="a" style="left:0;top:0;will-change:transform" width="1366" height="768" viewBox="0 0 1366 768" font-family="Liberation Mono">
<line x1="429.5" y1="132.5" x2="429.5" y2="686" stroke="#c8c8c8" stroke-width="1.1"/>
<line x1="925.5" y1="132.5" x2="925.5" y2="686" stroke="#c8c8c8" stroke-width="1.1"/>
<line x1="430" y1="132.5" x2="925" y2="132.5" stroke="#eeeeee" stroke-width="1"/>
<path d="M467.5 170.5H887.5V648.5H467.5Z" stroke="#840000" stroke-width="1.1" fill="none"/>
<path d="M474.5 178.5H879.5V640.5H474.5Z" stroke="#840000" stroke-width="1.1" fill="none"/>
<line x1="658.5" y1="170.5" x2="658.5" y2="178.5" stroke="#840000" stroke-width="1.1"/>
<line x1="658.5" y1="640.5" x2="658.5" y2="648.5" stroke="#840000" stroke-width="1.1"/>
<line x1="849.5" y1="170.5" x2="849.5" y2="178.5" stroke="#840000" stroke-width="1.1"/>
<line x1="849.5" y1="640.5" x2="849.5" y2="648.5" stroke="#840000" stroke-width="1.1"/>
<line x1="467.5" y1="361.5" x2="474.5" y2="361.5" stroke="#840000" stroke-width="1.1"/>
<line x1="879.5" y1="361.5" x2="887.5" y2="361.5" stroke="#840000" stroke-width="1.1"/>
<line x1="467.5" y1="552.5" x2="474.5" y2="552.5" stroke="#840000" stroke-width="1.1"/>
<line x1="879.5" y1="552.5" x2="887.5" y2="552.5" stroke="#840000" stroke-width="1.1"/>
<text x="563.50" y="177.00" font-size="8.33" fill="#840000" stroke="#840000" stroke-width="0.3" text-anchor="start" textLength="4.00" lengthAdjust="spacingAndGlyphs">1</text>
<text x="753.50" y="177.00" font-size="8.33" fill="#840000" stroke="#840000" stroke-width="0.3" text-anchor="start" textLength="4.00" lengthAdjust="spacingAndGlyphs">2</text>
<text x="563.50" y="647.00" font-size="8.33" fill="#840000" stroke="#840000" stroke-width="0.3" text-anchor="start" textLength="4.00" lengthAdjust="spacingAndGlyphs">1</text>
<text x="753.50" y="647.00" font-size="8.33" fill="#840000" stroke="#840000" stroke-width="0.3" text-anchor="start" textLength="4.00" lengthAdjust="spacingAndGlyphs">2</text>
<text x="469.00" y="269.00" font-size="9.09" fill="#840000" stroke="#840000" stroke-width="0.3" text-anchor="start" textLength="4.50" lengthAdjust="spacingAndGlyphs">A</text>
<text x="881.50" y="269.00" font-size="9.09" fill="#840000" stroke="#840000" stroke-width="0.3" text-anchor="start" textLength="4.50" lengthAdjust="spacingAndGlyphs">A</text>
<text x="469.00" y="460.00" font-size="9.09" fill="#840000" stroke="#840000" stroke-width="0.3" text-anchor="start" textLength="4.50" lengthAdjust="spacingAndGlyphs">B</text>
<text x="881.50" y="460.00" font-size="9.09" fill="#840000" stroke="#840000" stroke-width="0.3" text-anchor="start" textLength="4.50" lengthAdjust="spacingAndGlyphs">B</text>
<text x="469.00" y="651.00" font-size="9.09" fill="#840000" stroke="#840000" stroke-width="0.3" text-anchor="start" textLength="4.50" lengthAdjust="spacingAndGlyphs">C</text>
<text x="881.50" y="651.00" font-size="9.09" fill="#840000" stroke="#840000" stroke-width="0.3" text-anchor="start" textLength="4.50" lengthAdjust="spacingAndGlyphs">C</text>
<line x1="467.5" y1="518.5" x2="879.5" y2="518.5" stroke="#840000" stroke-width="1.1"/>
<line x1="467.5" y1="577.5" x2="879.5" y2="577.5" stroke="#840000" stroke-width="1.1"/>
<line x1="467.5" y1="600.5" x2="879.5" y2="600.5" stroke="#840000" stroke-width="1.1"/>
<line x1="467.5" y1="614.5" x2="879.5" y2="614.5" stroke="#840000" stroke-width="1.1"/>
<line x1="467.5" y1="627.5" x2="879.5" y2="627.5" stroke="#840000" stroke-width="1.1"/>
<line x1="467.5" y1="640.5" x2="879.5" y2="640.5" stroke="#840000" stroke-width="1.1"/>
<line x1="543.5" y1="614.5" x2="543.5" y2="627.5" stroke="#840000" stroke-width="1.1"/>
<line x1="788.5" y1="614.5" x2="788.5" y2="640.5" stroke="#840000" stroke-width="1.1"/>
<text x="472.00" y="586.30" font-size="8.79" fill="#840000" stroke="#840000" stroke-width="0.3" text-anchor="start" textLength="35.00" lengthAdjust="spacingAndGlyphs">Sheet  /</text>
<text x="472.00" y="596.30" font-size="8.64" fill="#840000" stroke="#840000" stroke-width="0.3" text-anchor="start" textLength="118.40" lengthAdjust="spacingAndGlyphs">File: electronics design.sch</text>
<text x="472.00" y="610.70" font-size="12.42" fill="#840000" font-weight="bold" stroke="#840000" stroke-width="0.7" text-anchor="start" textLength="26.90" lengthAdjust="spacingAndGlyphs">Title:</text>
<text x="472.00" y="624.80" font-size="9.39" fill="#840000" stroke="#840000" stroke-width="0.3" text-anchor="start" textLength="42.00" lengthAdjust="spacingAndGlyphs">Size: User</text>
<text x="555.60" y="624.80" font-size="9.39" fill="#840000" stroke="#840000" stroke-width="0.3" text-anchor="start" textLength="20.10" lengthAdjust="spacingAndGlyphs">Date:</text>
<text x="472.00" y="635.80" font-size="9.55" fill="#840000" stroke="#840000" stroke-width="0.3" text-anchor="start" textLength="227.60" lengthAdjust="spacingAndGlyphs">KiCad E.D.A.  kicad 4.0.7-e2-6376~58~ubuntu16.04.1</text>
<text x="796.60" y="624.80" font-size="9.39" fill="#840000" stroke="#840000" stroke-width="0.3" text-anchor="start" textLength="16.80" lengthAdjust="spacingAndGlyphs">Rev:</text>
<text x="796.60" y="635.80" font-size="9.55" fill="#840000" stroke="#840000" stroke-width="0.3" text-anchor="start" textLength="30.40" lengthAdjust="spacingAndGlyphs">Id: 1/1</text>
<rect x="582.5" y="211.5" width="233" height="68" fill="#ffffc2" stroke="#840000" stroke-width="1.1"/>
<line x1="556.4" y1="220.5" x2="567.8" y2="220.5" stroke="#008400" stroke-width="1.2"/>
<line x1="567.8" y1="220.5" x2="582.5" y2="220.5" stroke="#840000" stroke-width="1.2"/>
<text x="587.20" y="223.50" font-size="8.94" fill="#008484" stroke="#008484" stroke-width="0.3" text-anchor="start" textLength="151.80" lengthAdjust="spacingAndGlyphs">PB0(MOSI/DI/SDA/AIN0/OC0A/OC1A/AREF/PCINT0)</text>
<text x="572.70" y="219.70" font-size="6.36" fill="#840000" stroke="#840000" stroke-width="0.3" text-anchor="start" textLength="6.00" lengthAdjust="spacingAndGlyphs">11</text>
<line x1="556.4" y1="230.5" x2="567.8" y2="230.5" stroke="#008400" stroke-width="1.2"/>
<line x1="567.8" y1="230.5" x2="582.5" y2="230.5" stroke="#840000" stroke-width="1.2"/>
<text x="587.20" y="233.50" font-size="8.94" fill="#008484" stroke="#008484" stroke-width="0.3" text-anchor="start" textLength="121.80" lengthAdjust="spacingAndGlyphs">PB1(MISO/DO/AIN1/OC0B/OC1A/PCINT1)</text>
<text x="572.70" y="229.70" font-size="6.36" fill="#840000" stroke="#840000" stroke-width="0.3" text-anchor="start" textLength="6.00" lengthAdjust="spacingAndGlyphs">12</text>
<line x1="556.4" y1="240.5" x2="567.8" y2="240.5" stroke="#008400" stroke-width="1.2"/>
<line x1="567.8" y1="240.5" x2="582.5" y2="240.5" stroke="#840000" stroke-width="1.2"/>
<text x="587.20" y="243.50" font-size="8.94" fill="#008484" stroke="#008484" stroke-width="0.3" text-anchor="start" textLength="131.80" lengthAdjust="spacingAndGlyphs">PB2(SCK/USCK/SCL/T0/INT0/ADC1/PCINT2)</text>
<text x="572.70" y="239.70" font-size="6.36" fill="#840000" stroke="#840000" stroke-width="0.3" text-anchor="start" textLength="6.00" lengthAdjust="spacingAndGlyphs">14</text>
<line x1="556.4" y1="249.5" x2="567.8" y2="249.5" stroke="#008400" stroke-width="1.2"/>
<line x1="567.8" y1="249.5" x2="582.5" y2="249.5" stroke="#840000" stroke-width="1.2"/>
<text x="587.20" y="252.50" font-size="8.94" fill="#008484" stroke="#008484" stroke-width="0.3" text-anchor="start" textLength="111.60" lengthAdjust="spacingAndGlyphs">PB3(XTAL1/CLKI/OC1B/ADC3/PCINT3)</text>
<text x="575.70" y="248.70" font-size="6.36" fill="#840000" stroke="#840000" stroke-width="0.3" text-anchor="start" textLength="3.00" lengthAdjust="spacingAndGlyphs">2</text>
<line x1="556.4" y1="259.5" x2="567.8" y2="259.5" stroke="#008400" stroke-width="1.2"/>
<line x1="567.8" y1="259.5" x2="582.5" y2="259.5" stroke="#840000" stroke-width="1.2"/>
<text x="587.20" y="262.50" font-size="8.94" fill="#008484" stroke="#008484" stroke-width="0.3" text-anchor="start" textLength="113.80" lengthAdjust="spacingAndGlyphs">PB4(XTAL2/CLKO/OC1B/ADC2/PCINT4)</text>
<text x="575.70" y="258.70" font-size="6.36" fill="#840000" stroke="#840000" stroke-width="0.3" text-anchor="start" textLength="3.00" lengthAdjust="spacingAndGlyphs">5</text>
<line x1="556.4" y1="269.5" x2="567.8" y2="269.5" stroke="#008400" stroke-width="1.2"/>
<line x1="567.8" y1="269.5" x2="582.5" y2="269.5" stroke="#840000" stroke-width="1.2"/>
<text x="587.20" y="272.50" font-size="8.94" fill="#008484" stroke="#008484" stroke-width="0.3" text-anchor="start" textLength="88.20" lengthAdjust="spacingAndGlyphs">PB5(RESET/dW/ADC0/PCINT5)</text>
<text x="575.70" y="268.70" font-size="6.36" fill="#840000" stroke="#840000" stroke-width="0.3" text-anchor="start" textLength="3.00" lengthAdjust="spacingAndGlyphs">1</text>
<text x="583.00" y="208.20" font-size="7.58" fill="#008484" stroke="#008484" stroke-width="0.3" text-anchor="start" textLength="7.00" lengthAdjust="spacingAndGlyphs">U?</text>
<text x="796.00" y="222.90" font-size="7.58" fill="#008484" stroke="#008484" stroke-width="0.3" text-anchor="start" textLength="15.00" lengthAdjust="spacingAndGlyphs">VCC</text>
<text x="796.00" y="271.90" font-size="7.58" fill="#008484" stroke="#008484" stroke-width="0.3" text-anchor="start" textLength="15.00" lengthAdjust="spacingAndGlyphs">GND</text>
<line x1="815.5" y1="220.5" x2="829" y2="220.5" stroke="#840000" stroke-width="1.2"/>
<line x1="829" y1="220.5" x2="836.5" y2="220.5" stroke="#008400" stroke-width="1.2"/>
<line x1="836.5" y1="220.5" x2="836.5" y2="214.8" stroke="#008400" stroke-width="1.2"/>
<line x1="836.5" y1="214.8" x2="836.5" y2="209.8" stroke="#840000" stroke-width="1.2"/>
<circle cx="836.5" cy="207.2" r="2.5" fill="#fff" stroke="#840000" stroke-width="1.1"/>
<text x="829.00" y="202.20" font-size="7.88" fill="#008484" stroke="#008484" stroke-width="0.3" text-anchor="start" textLength="14.00" lengthAdjust="spacingAndGlyphs">VCC</text>
<text x="817.50" y="219.70" font-size="6.36" fill="#840000" stroke="#840000" stroke-width="0.3" text-anchor="start" textLength="8.50" lengthAdjust="spacingAndGlyphs">15</text>
<text x="820.00" y="268.70" font-size="6.36" fill="#840000" stroke="#840000" stroke-width="0.3" text-anchor="start" textLength="4.00" lengthAdjust="spacingAndGlyphs">8</text>
<line x1="815.5" y1="269.5" x2="829" y2="269.5" stroke="#840000" stroke-width="1.2"/>
<line x1="830" y1="269.5" x2="836.5" y2="269.5" stroke="#008400" stroke-width="1.2"/>
<line x1="836.5" y1="269.5" x2="836.5" y2="281.3" stroke="#008400" stroke-width="1.2"/>
<path d="M831.3 281.5H841.6L836.5 287Z" stroke="#840000" stroke-width="1.1" fill="none"/>
<text x="829.20" y="293.90" font-size="8.03" fill="#008484" stroke="#008484" stroke-width="0.3" text-anchor="start" textLength="13.80" lengthAdjust="spacingAndGlyphs">GND</text>
<text x="767.20" y="287.00" font-size="8.64" fill="#008484" stroke="#008484" stroke-width="0.3" text-anchor="start" textLength="57.20" lengthAdjust="spacingAndGlyphs">ATTINY45-20NU</text>
<path d="M529.5 215.5H554.0L556.4 220.5L554.0 225.5H529.5Z" stroke="#840000" stroke-width="1.2" fill="#fff"/>
<text x="532.90" y="223.80" font-size="9.85" fill="#840000" stroke="#840000" stroke-width="0.3" text-anchor="start" textLength="19.20" lengthAdjust="spacingAndGlyphs">MOSI</text>
<path d="M529.5 225.5H554.0L556.4 230.5L554.0 235.5H529.5Z" stroke="#840000" stroke-width="1.2" fill="#fff"/>
<text x="532.90" y="233.80" font-size="9.85" fill="#840000" stroke="#840000" stroke-width="0.3" text-anchor="start" textLength="19.20" lengthAdjust="spacingAndGlyphs">MISO</text>
<path d="M533.5 235.5H554.0L556.4 240.5L554.0 245H533.5Z" stroke="#840000" stroke-width="1.2" fill="#fff"/>
<text x="536.50" y="243.80" font-size="9.85" fill="#840000" stroke="#840000" stroke-width="0.3" text-anchor="start" textLength="15.60" lengthAdjust="spacingAndGlyphs">SCK</text>
<path d="M535.7 245H554.0L556.4 249.5L554.0 254.5H535.7Z" stroke="#840000" stroke-width="1.2" fill="#fff"/>
<text x="538.50" y="252.80" font-size="9.85" fill="#840000" stroke="#840000" stroke-width="0.3" text-anchor="start" textLength="13.60" lengthAdjust="spacingAndGlyphs">LED</text>
<path d="M489.5 254.5H554.0L556.4 259.5L554.0 264.7H489.5Z" stroke="#840000" stroke-width="1.2" fill="#fff"/>
<text x="492.50" y="262.80" font-size="9.85" fill="#840000" stroke="#840000" stroke-width="0.3" text-anchor="start" textLength="59.60" lengthAdjust="spacingAndGlyphs">PUSH_BUTTON</text>
<path d="M535.3 264.7H554.0L556.4 269.5L554.0 274.7H535.3Z" stroke="#840000" stroke-width="1.2" fill="#fff"/>
<text x="538.50" y="272.80" font-size="9.85" fill="#840000" stroke="#840000" stroke-width="0.3" text-anchor="start" textLength="13.60" lengthAdjust="spacingAndGlyphs">RST</text>
<rect x="586.5" y="317.5" width="59.3" height="38.7" fill="none" stroke="#840000" stroke-width="1.2"/>
<line x1="581.8" y1="327.5" x2="586.5" y2="327.5" stroke="#840000" stroke-width="1.2"/>
<line x1="645.8" y1="327.5" x2="649" y2="327.5" stroke="#840000" stroke-width="1.2"/>
<circle cx="590.5" cy="327.5" r="2.2" fill="none" stroke="#840000" stroke-width="1.1"/>
<circle cx="640.5" cy="327.5" r="2.2" fill="none" stroke="#840000" stroke-width="1.1"/>
<line x1="581.8" y1="337.5" x2="586.5" y2="337.5" stroke="#840000" stroke-width="1.2"/>
<line x1="645.8" y1="337.5" x2="649" y2="337.5" stroke="#840000" stroke-width="1.2"/>
<circle cx="590.5" cy="337.5" r="2.2" fill="none" stroke="#840000" stroke-width="1.1"/>
<circle cx="640.5" cy="337.5" r="2.2" fill="none" stroke="#840000" stroke-width="1.1"/>
<line x1="581.8" y1="346.5" x2="586.5" y2="346.5" stroke="#840000" stroke-width="1.2"/>
<line x1="645.8" y1="346.5" x2="649" y2="346.5" stroke="#840000" stroke-width="1.2"/>
<circle cx="590.5" cy="346.5" r="2.2" fill="none" stroke="#840000" stroke-width="1.1"/>
<circle cx="640.5" cy="346.5" r="2.2" fill="none" stroke="#840000" stroke-width="1.1"/>
<text x="597.10" y="329.80" font-size="7.27" fill="#840000" stroke="#840000" stroke-width="0.3" text-anchor="start" textLength="13.90" lengthAdjust="spacingAndGlyphs">MISO</text>
<text x="597.10" y="339.80" font-size="7.27" fill="#840000" stroke="#840000" stroke-width="0.3" text-anchor="start" textLength="10.90" lengthAdjust="spacingAndGlyphs">SCK</text>
<text x="597.10" y="348.80" font-size="7.27" fill="#840000" stroke="#840000" stroke-width="0.3" text-anchor="start" textLength="9.90" lengthAdjust="spacingAndGlyphs">RST</text>
<text x="623.00" y="329.80" font-size="7.27" fill="#840000" stroke="#840000" stroke-width="0.3" text-anchor="start" textLength="11.00" lengthAdjust="spacingAndGlyphs">VCC</text>
<text x="620.00" y="339.80" font-size="7.27" fill="#840000" stroke="#840000" stroke-width="0.3" text-anchor="start" textLength="14.00" lengthAdjust="spacingAndGlyphs">MOSI</text>
<text x="623.00" y="348.80" font-size="7.27" fill="#840000" stroke="#840000" stroke-width="0.3" text-anchor="start" textLength="11.00" lengthAdjust="spacingAndGlyphs">GND</text>
<path d="M556.5 322.3H579.9L582.3 327.5L579.9 332.6H556.5Z" stroke="#840000" stroke-width="1.2" fill="#fff"/>
<text x="559.00" y="330.80" font-size="9.85" fill="#840000" stroke="#840000" stroke-width="0.3" text-anchor="start" textLength="20.50" lengthAdjust="spacingAndGlyphs">MISO</text>
<path d="M560.5 332.6H579.9L582.3 337.5L579.9 342H560.5Z" stroke="#840000" stroke-width="1.2" fill="#fff"/>
<text x="563.50" y="340.80" font-size="9.85" fill="#840000" stroke="#840000" stroke-width="0.3" text-anchor="start" textLength="16.00" lengthAdjust="spacingAndGlyphs">SCK</text>
<path d="M560.5 342H579.9L582.3 346.5L579.9 351.8H560.5Z" stroke="#840000" stroke-width="1.2" fill="#fff"/>
<text x="563.50" y="349.80" font-size="9.85" fill="#840000" stroke="#840000" stroke-width="0.3" text-anchor="start" textLength="16.00" lengthAdjust="spacingAndGlyphs">RST</text>
<path d="M675.9 332.3H651.3L648.9 337.5L651.3 342.5H675.9Z" stroke="#840000" stroke-width="1.2" fill="#fff"/>
<text x="652.50" y="340.80" font-size="9.85" fill="#840000" stroke="#840000" stroke-width="0.3" text-anchor="start" textLength="21.00" lengthAdjust="spacingAndGlyphs">MOSI</text>
<text x="586.90" y="315.90" font-size="8.64" fill="#008484" stroke="#008484" stroke-width="0.3" text-anchor="start" textLength="7.10" lengthAdjust="spacingAndGlyphs">N?</text>
<text x="586.90" y="366.80" font-size="8.33" fill="#008484" stroke="#008484" stroke-width="0.3" text-anchor="start" textLength="35.40" lengthAdjust="spacingAndGlyphs">AVRISPSMD</text>
<line x1="649" y1="327.5" x2="655.9" y2="327.5" stroke="#008400" stroke-width="1.2"/>
<line x1="655.9" y1="327.5" x2="655.9" y2="322.5" stroke="#008400" stroke-width="1.2"/>
<line x1="655.9" y1="322.5" x2="655.9" y2="318.2" stroke="#840000" stroke-width="1.2"/>
<circle cx="655.9" cy="315.9" r="2.4" fill="#fff" stroke="#840000" stroke-width="1.1"/>
<text x="648.90" y="311.80" font-size="8.64" fill="#008484" stroke="#008484" stroke-width="0.3" text-anchor="start" textLength="12.80" lengthAdjust="spacingAndGlyphs">VCC</text>
<line x1="649" y1="346.5" x2="656.6" y2="346.5" stroke="#008400" stroke-width="1.2"/>
<line x1="656.6" y1="346.5" x2="656.6" y2="356.4" stroke="#008400" stroke-width="1.2"/>
<path d="M651.5 356.5H661.7L656.6 361.5Z" stroke="#840000" stroke-width="1.1" fill="none"/>
<text x="648.90" y="368.70" font-size="7.88" fill="#008484" stroke="#008484" stroke-width="0.3" text-anchor="start" textLength="14.40" lengthAdjust="spacingAndGlyphs">GND</text>
<path d="M521 413.3H540.6L543 418.5L540.6 424.5H521Z" stroke="#840000" stroke-width="1.2" fill="#fff"/>
<text x="524.00" y="421.80" font-size="9.85" fill="#840000" stroke="#840000" stroke-width="0.3" text-anchor="start" textLength="16.50" lengthAdjust="spacingAndGlyphs">LED</text>
<line x1="543" y1="418.5" x2="552" y2="418.5" stroke="#008400" stroke-width="1.2"/>
<line x1="552" y1="418.5" x2="561.8" y2="418.5" stroke="#840000" stroke-width="1.2"/>
<path d="M561.8 418.5L563.5 414.2L566.5 422.4L569.8 414.2L573 422.4L576.2 414.2L579.4 422.4L581.5 418.5" stroke="#840000" stroke-width="1.1" fill="none"/>
<line x1="581.5" y1="418.5" x2="590" y2="418.5" stroke="#840000" stroke-width="1.2"/>
<line x1="590" y1="418.5" x2="598.7" y2="418.5" stroke="#008400" stroke-width="1.2"/>
<line x1="600.4" y1="418.5" x2="609.2" y2="418.5" stroke="#840000" stroke-width="1.2"/>
<path d="M609.2 413.5L618.4 418.5L609.2 423.2Z" stroke="#840000" stroke-width="1.1" fill="none"/>
<line x1="618.4" y1="413" x2="618.4" y2="423.5" stroke="#840000" stroke-width="1.2"/>
<line x1="618.4" y1="418.5" x2="627.6" y2="418.5" stroke="#840000" stroke-width="1.2"/>
<line x1="627.6" y1="418.5" x2="636.5" y2="418.5" stroke="#008400" stroke-width="1.2"/>
<line x1="636.5" y1="418.5" x2="636.5" y2="428" stroke="#008400" stroke-width="1.2"/>
<path d="M631.2 428.5H641.7L636.5 433.5Z" stroke="#840000" stroke-width="1.1" fill="none"/>
<circle cx="617.5" cy="418.5" r="1.3" fill="#840000"/>
<text x="629.40" y="441.10" font-size="8.33" fill="#008484" stroke="#008484" stroke-width="0.3" text-anchor="start" textLength="13.60" lengthAdjust="spacingAndGlyphs">GND</text>
<text x="556.90" y="412.80" font-size="6.97" fill="#008484" stroke="#008484" stroke-width="0.3" text-anchor="start" textLength="7.90" lengthAdjust="spacingAndGlyphs">R?</text>
<text x="556.90" y="431.90" font-size="8.94" fill="#008484" stroke="#008484" stroke-width="0.3" text-anchor="start" textLength="54.90" lengthAdjust="spacingAndGlyphs">RES-US1206FAB</text>
<path d="M612.5 426L617 430.5M616.5 426L621 430.5M614.5 430.5L617 430.5L617 428M618.5 430.5L621 430.5L621 428" stroke="#840000" stroke-width="1" fill="none"/>
<text x="586.80" y="404.90" font-size="6.97" fill="#008484" stroke="#008484" stroke-width="0.3" text-anchor="start" textLength="39.50" lengthAdjust="spacingAndGlyphs">LEDFAB1206</text>
<text x="617.80" y="413.00" font-size="7.27" fill="#008484" stroke="#008484" stroke-width="0.3" text-anchor="start" textLength="8.20" lengthAdjust="spacingAndGlyphs">N?</text>
<text x="597.70" y="441.80" font-size="6.06" fill="#008484" stroke="#008484" stroke-width="0.3" text-anchor="start" textLength="7.50" lengthAdjust="spacingAndGlyphs">S?</text>
<line x1="665" y1="409.5" x2="689" y2="409.5" stroke="#000" stroke-width="1.1"/>
<line x1="677.5" y1="397" x2="677.5" y2="421" stroke="#000" stroke-width="1.1"/>
<path d="M510.3 475.3H574.3000000000001L576.7 480.5L574.3000000000001 485.5H510.3Z" stroke="#840000" stroke-width="1.2" fill="#fff"/>
<text x="513.00" y="483.80" font-size="9.85" fill="#840000" stroke="#840000" stroke-width="0.3" text-anchor="start" textLength="60.50" lengthAdjust="spacingAndGlyphs">PUSH_BUTTON</text>
<line x1="576.7" y1="480.5" x2="587.5" y2="480.5" stroke="#008400" stroke-width="1.2"/>
<line x1="587.5" y1="480.5" x2="587.5" y2="470.5" stroke="#008400" stroke-width="1.2"/>
<path d="M587.5 470.5H597.5V480.5H587.5" stroke="#840000" stroke-width="1.1" fill="none"/>
<line x1="597.5" y1="470.5" x2="614.1" y2="465.6" stroke="#840000" stroke-width="1.1"/>
<path d="M607.5 454V457M607.5 459V462M607.5 464V466.5" stroke="#840000" stroke-width="1.1" fill="none"/>
<path d="M599.5 457.6V453.5H614.5V457.6" stroke="#840000" stroke-width="1.1" fill="none"/>
<path d="M616.5 480.5V470.5H626.2V480.5H616.5" stroke="#840000" stroke-width="1.1" fill="none"/>
<line x1="626.2" y1="480.5" x2="639.5" y2="480.5" stroke="#008400" stroke-width="1.2"/>
<rect x="638.5" y="479" width="3" height="3" fill="none" stroke="#008400" stroke-width="0.9"/>
<text x="620.00" y="453.20" font-size="7.88" fill="#008484" stroke="#008484" stroke-width="0.3" text-anchor="start" textLength="80.50" lengthAdjust="spacingAndGlyphs">SWM_SWITCHSWM_SWITCH</text>
<text x="602.40" y="473.00" font-size="6.82" fill="#008484" stroke="#008484" stroke-width="0.3" text-anchor="start" textLength="3.60" lengthAdjust="spacingAndGlyphs">P</text>
<text x="610.00" y="473.00" font-size="6.82" fill="#008484" stroke="#008484" stroke-width="0.3" text-anchor="start" textLength="3.60" lengthAdjust="spacingAndGlyphs">S</text>
<text x="601.90" y="482.80" font-size="6.67" fill="#008484" stroke="#008484" stroke-width="0.3" text-anchor="start" textLength="11.10" lengthAdjust="spacingAndGlyphs">PB1</text>
</svg>
<!--/SCHEMATIC-->
</body></html>
